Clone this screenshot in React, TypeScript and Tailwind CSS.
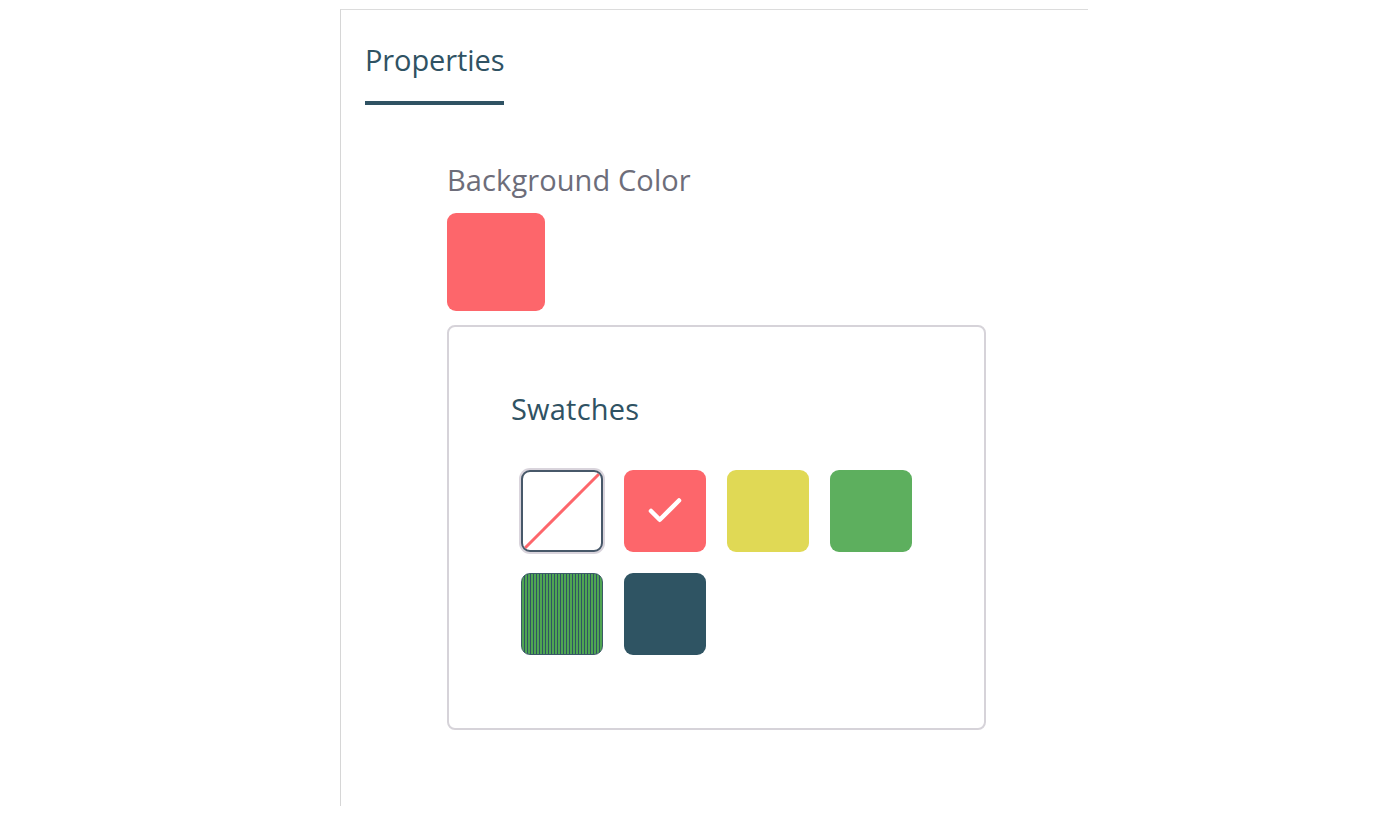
import { Check } from 'lucide-react'

const swatches = [
  { id: 'none' },
  { id: 'red', cls: 'bg-[#fd666b]', selected: true },
  { id: 'yellow', cls: 'bg-[#e0d955]' },
  { id: 'green', cls: 'bg-[#5daf5e]' },
  { id: 'striped', cls: 'bg-[repeating-linear-gradient(90deg,#4fa552_0px,#4fa552_2px,#2f5463_2px,#2f5463_3px)] border border-[#3b5a66]' },
  { id: 'slate', cls: 'bg-[#2f5463]' },
]

const App = () => {
  return (
    <div className="w-[1400px] h-[831px] bg-white font-['Open_Sans',sans-serif] pt-[9px]">
      <div className="ml-[340px] w-[748px] h-[797px] border-l border-t border-t-dashed border-l-[#d6d6d6] border-t-[#dcdcdc] pl-[24px]">
        <div className="inline-flex flex-col pt-[30px]">
          <h1 className="text-[29px] leading-[40px] text-[#2f5263] tracking-[-0.1px]">Properties</h1>
          <div className="h-[4px] bg-[#2f5263] mt-[21px]" />
        </div>

        <div className="ml-[82px] mt-[57px]">
          <div className="text-[29px] leading-[36px] text-[#6d6d7a] tracking-[0.1px]">Background Color</div>
          <div className="w-[98px] h-[98px] rounded-[9px] bg-[#fd666b] mt-[15px]" />

          <div className="w-[539px] h-[405px] mt-[14px] border-2 border-[#d6d3d9] rounded-[8px] pl-[62px] pt-[64px]">
            <div className="text-[29px] leading-[36px] text-[#2f5263] tracking-[0.2px]">Swatches</div>
            <div className="grid grid-cols-[repeat(4,82px)] gap-[21px] mt-[43px] ml-[10px]">
              {swatches.map((s) =>
                s.id === 'none' ? (
                  <div
                    key={s.id}
                    className="w-[82px] h-[82px] rounded-[9px] border-2 border-[#475869] bg-white ring-2 ring-[#d9d4dc] overflow-hidden"
                  >
                    <svg viewBox="0 0 78 78" className="w-full h-full">
                      <line x1="2" y1="76" x2="76" y2="2" stroke="#fd666b" strokeWidth="3" />
                    </svg>
                  </div>
                ) : (
                  <div
                    key={s.id}
                    className={`w-[82px] h-[82px] rounded-[9px] flex items-center justify-center ${s.cls}`}
                  >
                    {s.selected && <Check size={42} strokeWidth={2.6} className="text-white" />}
                  </div>
                )
              )}
            </div>
          </div>
        </div>
      </div>
    </div>
  )
}

export default App
